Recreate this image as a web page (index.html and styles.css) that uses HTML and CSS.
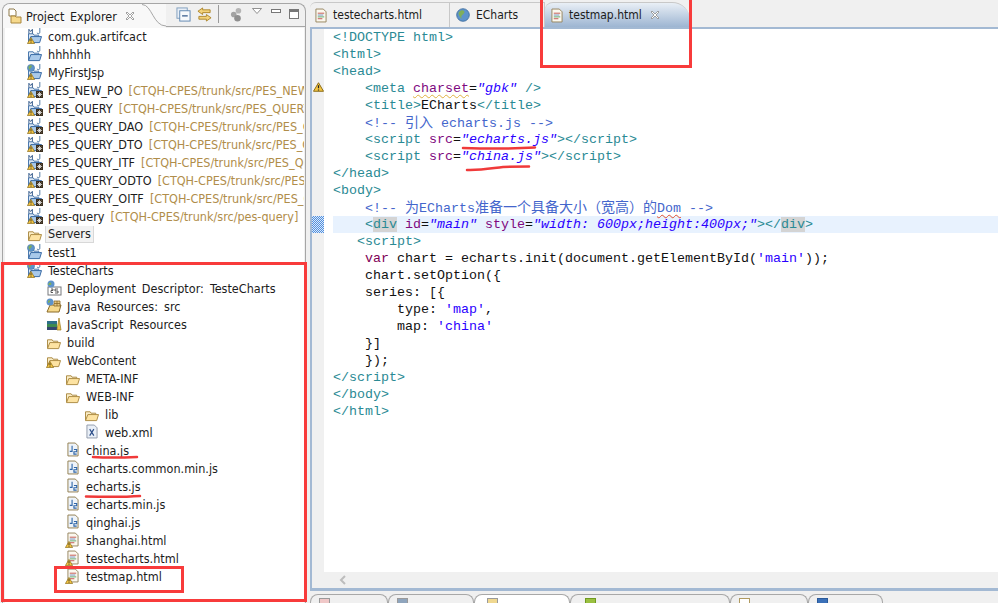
FILE: index.html
```html
<!DOCTYPE html>
<html lang="zh">
<head>
  <meta charset="UTF-8">
  <title>testmap.html - Eclipse</title>
  <link rel="stylesheet" href="styles.css">
</head>
<body>
  <svg class="defs" width="0" height="0">
    <defs>
      <symbol id="warn" viewBox="0 0 9 8"><path d="M4.500.500 8.600 7.500H.400Z" fill="#f4c542" stroke="#8a6a14" stroke-width=".8"/><path d="M4.500 2.500v2.600M4.500 6v.8" stroke="#222" stroke-width="1"/></symbol>
      <symbol id="folder" viewBox="0 0 16 14"><path d="M1 12V3h5l1 1.500h5V6" fill="#fbeec8" stroke="#a9873f"/><path d="M1 12.500 3.500 6h11.500L13 12.500Z" fill="#fde3a2" stroke="#a9873f"/></symbol>
      <symbol id="prj" viewBox="0 0 16 14"><path d="M1 12V3h5l1 1.500h5V6" fill="#dce8f5" stroke="#3f6fa8"/><path d="M1 12.500 3.500 6h11.500L13 12.500Z" fill="#a9c9ea" stroke="#2f62a0"/></symbol>
      <symbol id="js" viewBox="0 0 13 15"><path d="M1 .5h8l3 3v11H1Z" fill="#eef3f9" stroke="#8f7b4b"/><path d="M5.500 3.500v6H3M7.500 7.500h3v2.500h-3v2.500h3" fill="none" stroke="#2f66a8" stroke-width="1.200"/></symbol>
      <symbol id="html" viewBox="0 0 13 15"><path d="M1 .5h8l3 3v11H1Z" fill="#fbf8ef" stroke="#94815a"/><path d="M3 5h7" stroke="#c0504d"/><path d="M3 7h6" stroke="#6d8fc0"/><path d="M3 9h7" stroke="#5aa36a"/><path d="M3 11h5" stroke="#c0504d"/></symbol>
      <symbol id="xml" viewBox="0 0 13 15"><path d="M1 .5h8l3 3v11H1Z" fill="#e9eff7" stroke="#8d97a8"/><path d="m4 5 4.500 7M8.500 5 4 12" stroke="#2d4f8a" stroke-width="1.300"/></symbol>
      <symbol id="globe" viewBox="0 0 10 10"><circle cx="5" cy="5" r="4.500" fill="#5d93cb" stroke="#3e6d9c" stroke-width=".6"/><path d="M2 3c2-2 4-1.500 4 0S3 5 4 7 1 5 2 3Z" fill="#7fae5a"/></symbol>
      <symbol id="m-j" viewBox="0 0 16 8"><path d="M1 6.500V1.500l2 2.500 2-2.500v5" fill="none" stroke="#33598a" stroke-width="1.100"/><path d="M13.500 0v5c0 2-3 2-3 .5" fill="none" stroke="#3a6a9a"/></symbol>
      <symbol id="svn" viewBox="0 0 8 8"><rect width="8" height="8" fill="#3b2f1f"/><path d="M4 1v6M1 4h6M2 2l4 4M6 2 2 6" stroke="#fff" stroke-width=".8"/></symbol>
      <symbol id="x" viewBox="0 0 10 10"><path d="M1 2 2 1l3 3 3-3 1 1-3 3 3 3-1 1-3-3-3 3-1-1 3-3Z" fill="#fff" stroke="#8c8c8c" stroke-width=".8"/></symbol>
    </defs>
  </svg>

  <div class="workbench">
    <section class="explorer">
      <header class="view-head">
        <div class="view-tab">
          <svg class="ico" viewBox="0 0 16 16"><path d="M2 1h5l2 2v5H2Z" fill="#fff" stroke="#8f7b4b"/><path d="M4 8h4l1 1h5v6H4Z" fill="#f6d98c" stroke="#a9873f"/></svg>
          <span class="view-title">Project Explorer</span>
          <svg class="close"><use href="#x"/></svg>
          <svg class="tab-curve" viewBox="0 0 26 23"><path d="M0 0H2C12 0 13 22 26 22V23H0Z" fill="#f8f8f8"/><path d="M2 .5C12 .5 13 22 26 22" fill="none" stroke="#a6a6a6"/></svg>
        </div>
        <div class="view-tools">
          <svg class="tool" viewBox="0 0 16 16"><rect x="1" y="1" width="11" height="11" fill="#e8eff7" stroke="#7f9dbd"/><rect x="4" y="4" width="11" height="11" fill="#f6f9fc" stroke="#5e86b0"/><path d="M6.500 9.500h6" stroke="#33598a" stroke-width="1.400"/></svg>
          <svg class="tool" viewBox="0 0 16 16"><path d="M6 1 1 4.500 6 8V6h8V3H6ZM10 8l5 3.500-5 3.500v-2H2v-3h8Z" fill="#f3d27a" stroke="#a67c1e" stroke-width=".9"/></svg>
          <i class="sep"></i>
          <svg class="tool" viewBox="0 0 16 16"><circle cx="9" cy="4" r="3" fill="#b5b5b5"/><circle cx="4" cy="8" r="3" fill="#a3a3a3"/><circle cx="8" cy="12" r="3.500" fill="#8f8f8f"/></svg>
          <svg class="tool-menu" viewBox="0 0 10 6"><path d="M.5.5h9L5 5.500Z" fill="#fff" stroke="#777" stroke-width=".8"/></svg>
          <i class="min"></i>
          <i class="max"></i>
        </div>
      </header>

      <ul class="tree">
        <li class="row"><span class="gl"><svg class="sub"><use href="#prj"/></svg><svg class="mj"><use href="#m-j"/></svg><svg class="w"><use href="#warn"/></svg></span>com.guk.artifcact</li>
        <li class="row"><span class="gl"><svg class="sub"><use href="#prj"/></svg><svg class="mj jonly"><use href="#m-j"/></svg></span>hhhhhh</li>
        <li class="row"><span class="gl"><svg class="sub"><use href="#prj"/></svg><svg class="gb"><use href="#globe"/></svg><svg class="mj jonly"><use href="#m-j"/></svg><svg class="w"><use href="#warn"/></svg></span>MyFirstJsp</li>
        <li class="row"><span class="gl"><svg class="sub"><use href="#prj"/></svg><svg class="mj"><use href="#m-j"/></svg><svg class="w"><use href="#warn"/></svg><svg class="sv"><use href="#svn"/></svg></span>PES_NEW_PO <span class="repo">[CTQH-CPES/trunk/src/PES_NEW_PO]</span></li>
        <li class="row"><span class="gl"><svg class="sub"><use href="#prj"/></svg><svg class="mj"><use href="#m-j"/></svg><svg class="w"><use href="#warn"/></svg><svg class="sv"><use href="#svn"/></svg></span>PES_QUERY <span class="repo">[CTQH-CPES/trunk/src/PES_QUERY]</span></li>
        <li class="row"><span class="gl"><svg class="sub"><use href="#prj"/></svg><svg class="mj"><use href="#m-j"/></svg><svg class="w"><use href="#warn"/></svg><svg class="sv"><use href="#svn"/></svg></span>PES_QUERY_DAO <span class="repo">[CTQH-CPES/trunk/src/PES_QUERY_DAO]</span></li>
        <li class="row"><span class="gl"><svg class="sub"><use href="#prj"/></svg><svg class="mj"><use href="#m-j"/></svg><svg class="w"><use href="#warn"/></svg><svg class="sv"><use href="#svn"/></svg></span>PES_QUERY_DTO <span class="repo">[CTQH-CPES/trunk/src/PES_QUERY_DTO]</span></li>
        <li class="row"><span class="gl"><svg class="sub"><use href="#prj"/></svg><svg class="mj"><use href="#m-j"/></svg><svg class="w"><use href="#warn"/></svg><svg class="sv"><use href="#svn"/></svg></span>PES_QUERY_ITF <span class="repo">[CTQH-CPES/trunk/src/PES_QUERY_ITF]</span></li>
        <li class="row"><span class="gl"><svg class="sub"><use href="#prj"/></svg><svg class="mj"><use href="#m-j"/></svg><svg class="w"><use href="#warn"/></svg><svg class="sv"><use href="#svn"/></svg></span>PES_QUERY_ODTO <span class="repo">[CTQH-CPES/trunk/src/PES_QUERY_ODTO]</span></li>
        <li class="row"><span class="gl"><svg class="sub"><use href="#prj"/></svg><svg class="mj"><use href="#m-j"/></svg><svg class="w"><use href="#warn"/></svg><svg class="sv"><use href="#svn"/></svg></span>PES_QUERY_OITF <span class="repo">[CTQH-CPES/trunk/src/PES_QUERY_OITF]</span></li>
        <li class="row"><span class="gl"><svg class="sub"><use href="#prj"/></svg><svg class="mj"><use href="#m-j"/></svg><svg class="w"><use href="#warn"/></svg><svg class="sv"><use href="#svn"/></svg></span>pes-query <span class="repo">[CTQH-CPES/trunk/src/pes-query]</span></li>
        <li class="row"><span class="gl"><svg class="sub"><use href="#folder"/></svg></span><span class="picked">Servers</span></li>
        <li class="row"><span class="gl"><svg class="sub"><use href="#prj"/></svg><svg class="gb"><use href="#globe"/></svg><svg class="mj jonly"><use href="#m-j"/></svg></span>test1</li>
        <li class="row"><span class="gl"><svg class="sub"><use href="#prj"/></svg><svg class="gb"><use href="#globe"/></svg><svg class="mj jonly"><use href="#m-j"/></svg><svg class="w"><use href="#warn"/></svg></span>TesteCharts</li>
        <li class="row d1"><span class="gl"><svg class="full" viewBox="0 0 16 16"><rect x="2" y="7" width="13" height="8" fill="#fff" stroke="#77797d"/><circle cx="5" cy="4" r="3.500" fill="#5d93cb"/><path d="M3 3c2-1 3 0 2 2L2 5Z" fill="#7fae5a"/><path d="M5 9h2v1.500H5v2h2M9 9h3M9 9v2h3v2H9" fill="none" stroke="#333" stroke-width=".8"/></svg></span>Deployment Descriptor: TesteCharts</li>
        <li class="row d1"><span class="gl"><svg class="full" viewBox="0 0 16 16"><path d="M1 14 4 7h11l-2 7Z" fill="#f6d98c" stroke="#8a6a28"/><path d="M8 3h6v5H8ZM8 5.500h6M11 3v5" fill="#e8c880" stroke="#8a6a28" stroke-width=".8"/><circle cx="4" cy="4" r="3.500" fill="#5d93cb"/><path d="M2 3c1-1 3-1 2 1L2 5Z" fill="#7fae5a"/></svg></span>Java Resources: src</li>
        <li class="row d1"><span class="gl"><svg class="full" viewBox="0 0 16 16"><rect x="1" y="5" width="10" height="3" fill="#2d6f88"/><rect x="1" y="8" width="10" height="3" fill="#3f8a4f"/><rect x="1" y="11" width="10" height="3" fill="#34466e"/><path d="m11 14 2-12 2 12Z" fill="#ecc04c" stroke="#9a7a1c" stroke-width=".7"/></svg></span>JavaScript Resources</li>
        <li class="row d1"><span class="gl"><svg class="sub"><use href="#folder"/></svg></span>build</li>
        <li class="row d1"><span class="gl"><svg class="sub"><use href="#folder"/></svg><svg class="w"><use href="#warn"/></svg></span>WebContent</li>
        <li class="row d2"><span class="gl"><svg class="sub"><use href="#folder"/></svg></span>META-INF</li>
        <li class="row d2"><span class="gl"><svg class="sub"><use href="#folder"/></svg></span>WEB-INF</li>
        <li class="row d3"><span class="gl"><svg class="sub"><use href="#folder"/></svg></span>lib</li>
        <li class="row d3"><span class="gl"><svg class="fl"><use href="#xml"/></svg></span>web.xml</li>
        <li class="row d2"><span class="gl"><svg class="fl"><use href="#js"/></svg></span>china.js</li>
        <li class="row d2"><span class="gl"><svg class="fl"><use href="#js"/></svg></span>echarts.common.min.js</li>
        <li class="row d2"><span class="gl"><svg class="fl"><use href="#js"/></svg></span>echarts.js</li>
        <li class="row d2"><span class="gl"><svg class="fl"><use href="#js"/></svg></span>echarts.min.js</li>
        <li class="row d2"><span class="gl"><svg class="fl"><use href="#js"/></svg></span>qinghai.js</li>
        <li class="row d2"><span class="gl"><svg class="fl"><use href="#html"/></svg><svg class="w"><use href="#warn"/></svg></span>shanghai.html</li>
        <li class="row d2"><span class="gl"><svg class="fl"><use href="#html"/></svg><svg class="w"><use href="#warn"/></svg></span>testecharts.html</li>
        <li class="row d2"><span class="gl"><svg class="fl"><use href="#html"/></svg><svg class="w"><use href="#warn"/></svg></span>testmap.html</li>
      </ul>
    </section>

    <section class="editor">
      <header class="ed-tabs">
        <div class="ed-tab t1"><svg class="tab-file"><use href="#html"/></svg>testecharts.html</div>
        <div class="ed-tab t2"><svg class="tab-globe"><use href="#globe"/></svg>ECharts</div>
        <div class="ed-tab t3"><svg class="tab-file"><use href="#html"/></svg>testmap.html<svg class="close"><use href="#x"/></svg></div>
      </header>
      <div class="ed-frame">
        <div class="ed-main">
          <div class="gutter">
            <svg class="gut-warn"><use href="#warn"/></svg>
            <i class="gut-mark"></i>
          </div>
          <div class="code">
            <div class="ln"><span class="tg">&lt;!DOCTYPE html&gt;</span></div>
            <div class="ln"><span class="tg">&lt;html&gt;</span></div>
            <div class="ln"><span class="tg">&lt;head&gt;</span></div>
            <div class="ln">    <span class="tg">&lt;meta</span> <span class="at warnline">charset</span>=<span class="st">"gbk"</span> <span class="tg">/&gt;</span></div>
            <div class="ln">    <span class="tg">&lt;title&gt;</span>ECharts<span class="tg">&lt;/title&gt;</span></div>
            <div class="ln">    <span class="cm">&lt;!-- <span class="cjk">引入</span> echarts.js --&gt;</span></div>
            <div class="ln">    <span class="tg">&lt;script</span> <span class="at">src</span>=<span class="st">"echarts.js"</span><span class="tg">&gt;&lt;/script&gt;</span></div>
            <div class="ln">    <span class="tg">&lt;script</span> <span class="at">src</span>=<span class="st">"china.js"</span><span class="tg">&gt;&lt;/script&gt;</span></div>
            <div class="ln"><span class="tg">&lt;/head&gt;</span></div>
            <div class="ln"><span class="tg">&lt;body&gt;</span></div>
            <div class="ln">    <span class="cm">&lt;!-- <span class="cjk">为</span>ECharts<span class="cjk">准备一个具备大小（宽高）的</span><span class="errline">Dom</span> --&gt;</span></div>
            <div class="ln cur">    <span class="tg">&lt;<span class="occ">div</span></span> <span class="at">id</span>=<span class="st">"main"</span> <span class="at">style</span>=<span class="st">"width: 600px;height:400px;"</span><span class="tg">&gt;&lt;/<span class="occ">div</span>&gt;</span></div>
            <div class="ln">   <span class="tg">&lt;script&gt;</span></div>
            <div class="ln">    <span class="kw">var</span> chart = echarts.init(document.getElementById(<span class="qs">'main'</span>));</div>
            <div class="ln">    chart.setOption({</div>
            <div class="ln">    series: [{</div>
            <div class="ln">        type: <span class="qs">'map'</span>,</div>
            <div class="ln">        map: <span class="qs">'china'</span></div>
            <div class="ln">    }]</div>
            <div class="ln">    });</div>
            <div class="ln"><span class="tg">&lt;/script&gt;</span></div>
            <div class="ln"><span class="tg">&lt;/body&gt;</span></div>
            <div class="ln"><span class="tg">&lt;/html&gt;</span></div>
          </div>
        </div>
        <div class="hscroll"><svg class="chev" viewBox="0 0 8 10"><path d="M6 1 2 5l4 4" fill="none" stroke="#bdbdbd" stroke-width="2"/></svg></div>
      </div>
      <footer class="bottom-tabs">
        <div class="b b1"><i class="tip"></i></div>
        <div class="b b2"><i class="tip"></i></div>
        <div class="b b3"><i class="tip"></i></div>
        <div class="b b4"><i class="tip"></i></div>
        <div class="b b5"><i class="tip"></i></div>
        <div class="b b6"><i class="tip"></i></div>
      </footer>
    </section>
  </div>

  <!-- red notes drawn on top of the screenshot -->
  <div class="box box-tree"></div>
  <div class="box box-file"></div>
  <div class="box box-tab"></div>
  <svg class="scribble" width="998" height="603" viewBox="0 0 998 603">
    <g fill="none" stroke="#f03a3a" stroke-width="2.500" stroke-linecap="round">
      <path d="M93 457c10 .6 30 .6 44 0"/>
      <path d="M86 496.500c20 .5 40 .5 54-.5"/>
      <path d="M463 148c25 .8 50 .8 72-.5"/>
      <path d="M467 170c15 .5 26-2 36-3 10-.5 18-.5 26-.5"/>
    </g>
  </svg>
</body>
</html>
```
FILE: styles.css
```css
* { box-sizing: border-box; }
html, body { margin: 0; padding: 0; }
body {
  position: relative;
  width: 998px;
  height: 603px;
  overflow: hidden;
  background: #f0f0f0;
  font-family: "DejaVu Sans", Tahoma, sans-serif;
  font-stretch: condensed;
  font-size: 12px;
  color: #1c1c1c;
}
.defs { position: absolute; }
.workbench { display: flex; height: 603px; }

/* project explorer */
.explorer {
  flex: 0 0 304px;
  margin: 3px 2px 0 2px;
  border: 1px solid #a6a6a6;
  border-bottom: 0;
  border-radius: 8px 8px 0 0;
  display: flex;
  flex-direction: column;
  overflow: hidden;
  background: #f0f0f0;
}
.view-head { display: flex; height: 24px; flex: none; }
.view-tab {
  display: flex;
  align-items: center;
  gap: 3px;
  width: 163px;
  padding-left: 4px;
  background: #f8f8f8;
  white-space: nowrap;
  position: relative;
}
.view-title { font-size: 12.500px; word-spacing: 2px; }
.ico { width: 16px; height: 16px; flex: none; }
.close { width: 10px; height: 10px; margin-left: 5px; flex: none; }
.tab-curve { position: absolute; right: 0; top: 0; width: 26px; height: 23px; }
.view-tools {
  flex: 1;
  display: flex;
  align-items: center;
  padding: 0 6px 2px 10px;
  border-bottom: 1px solid #a6a6a6;
  margin-bottom: 1px;
}
.tool { width: 15px; height: 15px; margin-right: 6px; flex: none; }
.sep { width: 1px; height: 18px; background: #9a9a9a; margin: 0 11px 0 0; flex: none; }
.tool-menu { width: 10px; height: 6px; margin: -6px 9px 0 1px; flex: none; }
.min { width: 10px; height: 4px; border: 1px solid #777; background: #fff; margin: -6px 8px 0 0; flex: none; }
.max { width: 10px; height: 10px; border: 1px solid #777; border-top-width: 3px; background: #fff; flex: none; }
.tree {
  list-style: none;
  margin: 0 1px 0 2px;
  padding: 0;
  flex: 1;
  background: #fff;
}
.row {
  display: flex;
  align-items: center;
  height: 18px;
  padding-left: 22px;
  padding-bottom: 2px;
  font-size: 12.500px;
  word-spacing: 2.500px;
  white-space: pre;
  overflow: hidden;
}
.repo { color: #b08d4a; }
.d1 { padding-left: 41px; }
.d2 { padding-left: 60px; }
.d3 { padding-left: 79px; }
.gl { position: relative; flex: none; width: 16px; height: 16px; margin-right: 5px; }
.gl svg { position: absolute; }
.sub { left: 0; top: 3px; width: 16px; height: 13px; }
.full { left: 0; top: 0; width: 16px; height: 16px; }
.mj { left: 0; top: 0; width: 16px; height: 7px; }
.jonly { clip-path: inset(0 0 0 50%); }
.w { left: 0; top: 9px; width: 8px; height: 7px; }
.sv { left: 9px; top: 9px; width: 7px; height: 7px; }
.gb { left: 0; top: 0; width: 8px; height: 8px; }
.fl { left: 2px; top: 0; width: 12px; height: 15px; }
.picked {
  background: #f2f2f2;
  outline: 1px solid #d8d8d8;
  padding: 0 2px;
  margin-left: -2px;
  height: 16px;
  line-height: 16px;
}

/* editor */
.editor { flex: 1; display: flex; flex-direction: column; margin-left: 2px; min-width: 0; }
.ed-tabs { display: flex; height: 27px; padding-top: 2px; flex: none; }
.ed-tab {
  display: flex;
  align-items: center;
  gap: 6px;
  padding-left: 6px;
  border-top: 1px solid #c8c8c8;
  border-right: 1px solid #c8c8c8;
  white-space: nowrap;
}
.tab-file { width: 12px; height: 15px; flex: none; }
.tab-globe { width: 14px; height: 14px; flex: none; margin-left: 2px; }
.t1 { width: 140px; border-radius: 6px 0 0 0; padding-left: 5px; }
.t2 { width: 95px; padding-left: 4px; }
.t3 {
  width: 145px;
  padding-left: 6px;
  border-right: 0;
  background: linear-gradient(#e9eff6, #9db5d2);
  border-radius: 8px 18px 0 0;
}
.t3 .close { margin-left: 2px; }
.ed-frame {
  flex: 1;
  display: flex;
  flex-direction: column;
  border: solid #a3b9d3;
  border-width: 2px 0 3px 2px;
  min-height: 0;
}
.ed-main { flex: 1; display: flex; background: #fff; min-height: 0; overflow: hidden; }
.gutter { position: relative; flex: none; width: 12px; background: #f0f0f0; }
.gut-warn { position: absolute; left: 1px; top: 53px; width: 11px; height: 10px; }
.gut-mark {
  position: absolute;
  left: 0;
  top: 187px;
  width: 12px;
  height: 17px;
  background: repeating-conic-gradient(#4f8fe0 0 25%, #dce9f8 0 50%) 0 0 / 2px 2px;
}
.code {
  flex: 1;
  padding-left: 9px;
  font-family: "Liberation Mono", "Courier New", "Noto Sans CJK SC", monospace;
  font-stretch: normal;
  font-size: 13.333px;
  line-height: 17px;
  color: #111;
}
.ln { height: 17px; white-space: pre; }
.cur { background: #e8f2fe; }
.tg { color: #2a8a94; }
.at { color: #7f0a7f; }
.st { color: #2a00ff; font-style: italic; }
.qs { color: #2a00ff; }
.kw { color: #7f0055; }
.cm { color: #4466cc; }
.cjk { font-family: "Noto Sans CJK SC", sans-serif; font-size: 14px; line-height: 1; }
.occ { background: #d4d4d4; }
.warnline { text-decoration: underline wavy #e0b040 1px; text-underline-offset: 2px; }
.errline { text-decoration: underline wavy #e05030 1px; text-underline-offset: 2px; }
.hscroll {
  flex: none;
  height: 16px;
  background: #f0f0f0;
  display: flex;
  align-items: center;
  padding-left: 27px;
}
.chev { width: 8px; height: 10px; }
.bottom-tabs { flex: none; height: 12px; padding: 3px 0 0 0; display: flex; background: #f0f0f0; }
.b {
  height: 12px;
  padding: 3px 0 0 8px;
  border: 1px solid #a8a8a8;
  border-bottom: 0;
  border-radius: 8px 8px 0 0;
  flex: none;
}
.tip { display: block; width: 11px; height: 6px; background: #e8e8f0; border: 1px solid #9a9a9a; }
.b1 { width: 78px; }
.b1 .tip { background: #f0c8c8; }
.b2 { width: 86px; }
.b2 .tip { background: #8fa5bd; }
.b3 { width: 96px; background: #fff; padding-left: 12px; }
.b3 .tip { background: #f0d890; }
.b4 { width: 160px; padding-left: 14px; }
.b4 .tip { background: #9ac040; border-color: #6f9a20; }
.b5 { width: 78px; }
.b5 .tip { background: #fff; border-color: #b09a60; }
.b6 { width: 75px; }
.b6 .tip { background: #3a70b8; border-color: #2a5a9a; }

/* red annotation boxes */
.box { position: absolute; border: 3px solid #f83b3b; pointer-events: none; }
.box-tree { left: 1px; top: 262px; width: 306px; height: 340px; }
.box-file { left: 54px; top: 566px; width: 130px; height: 27px; }
.box-tab { left: 540px; top: -4px; width: 152px; height: 72px; }
.scribble { position: absolute; left: 0; top: 0; pointer-events: none; }
```
